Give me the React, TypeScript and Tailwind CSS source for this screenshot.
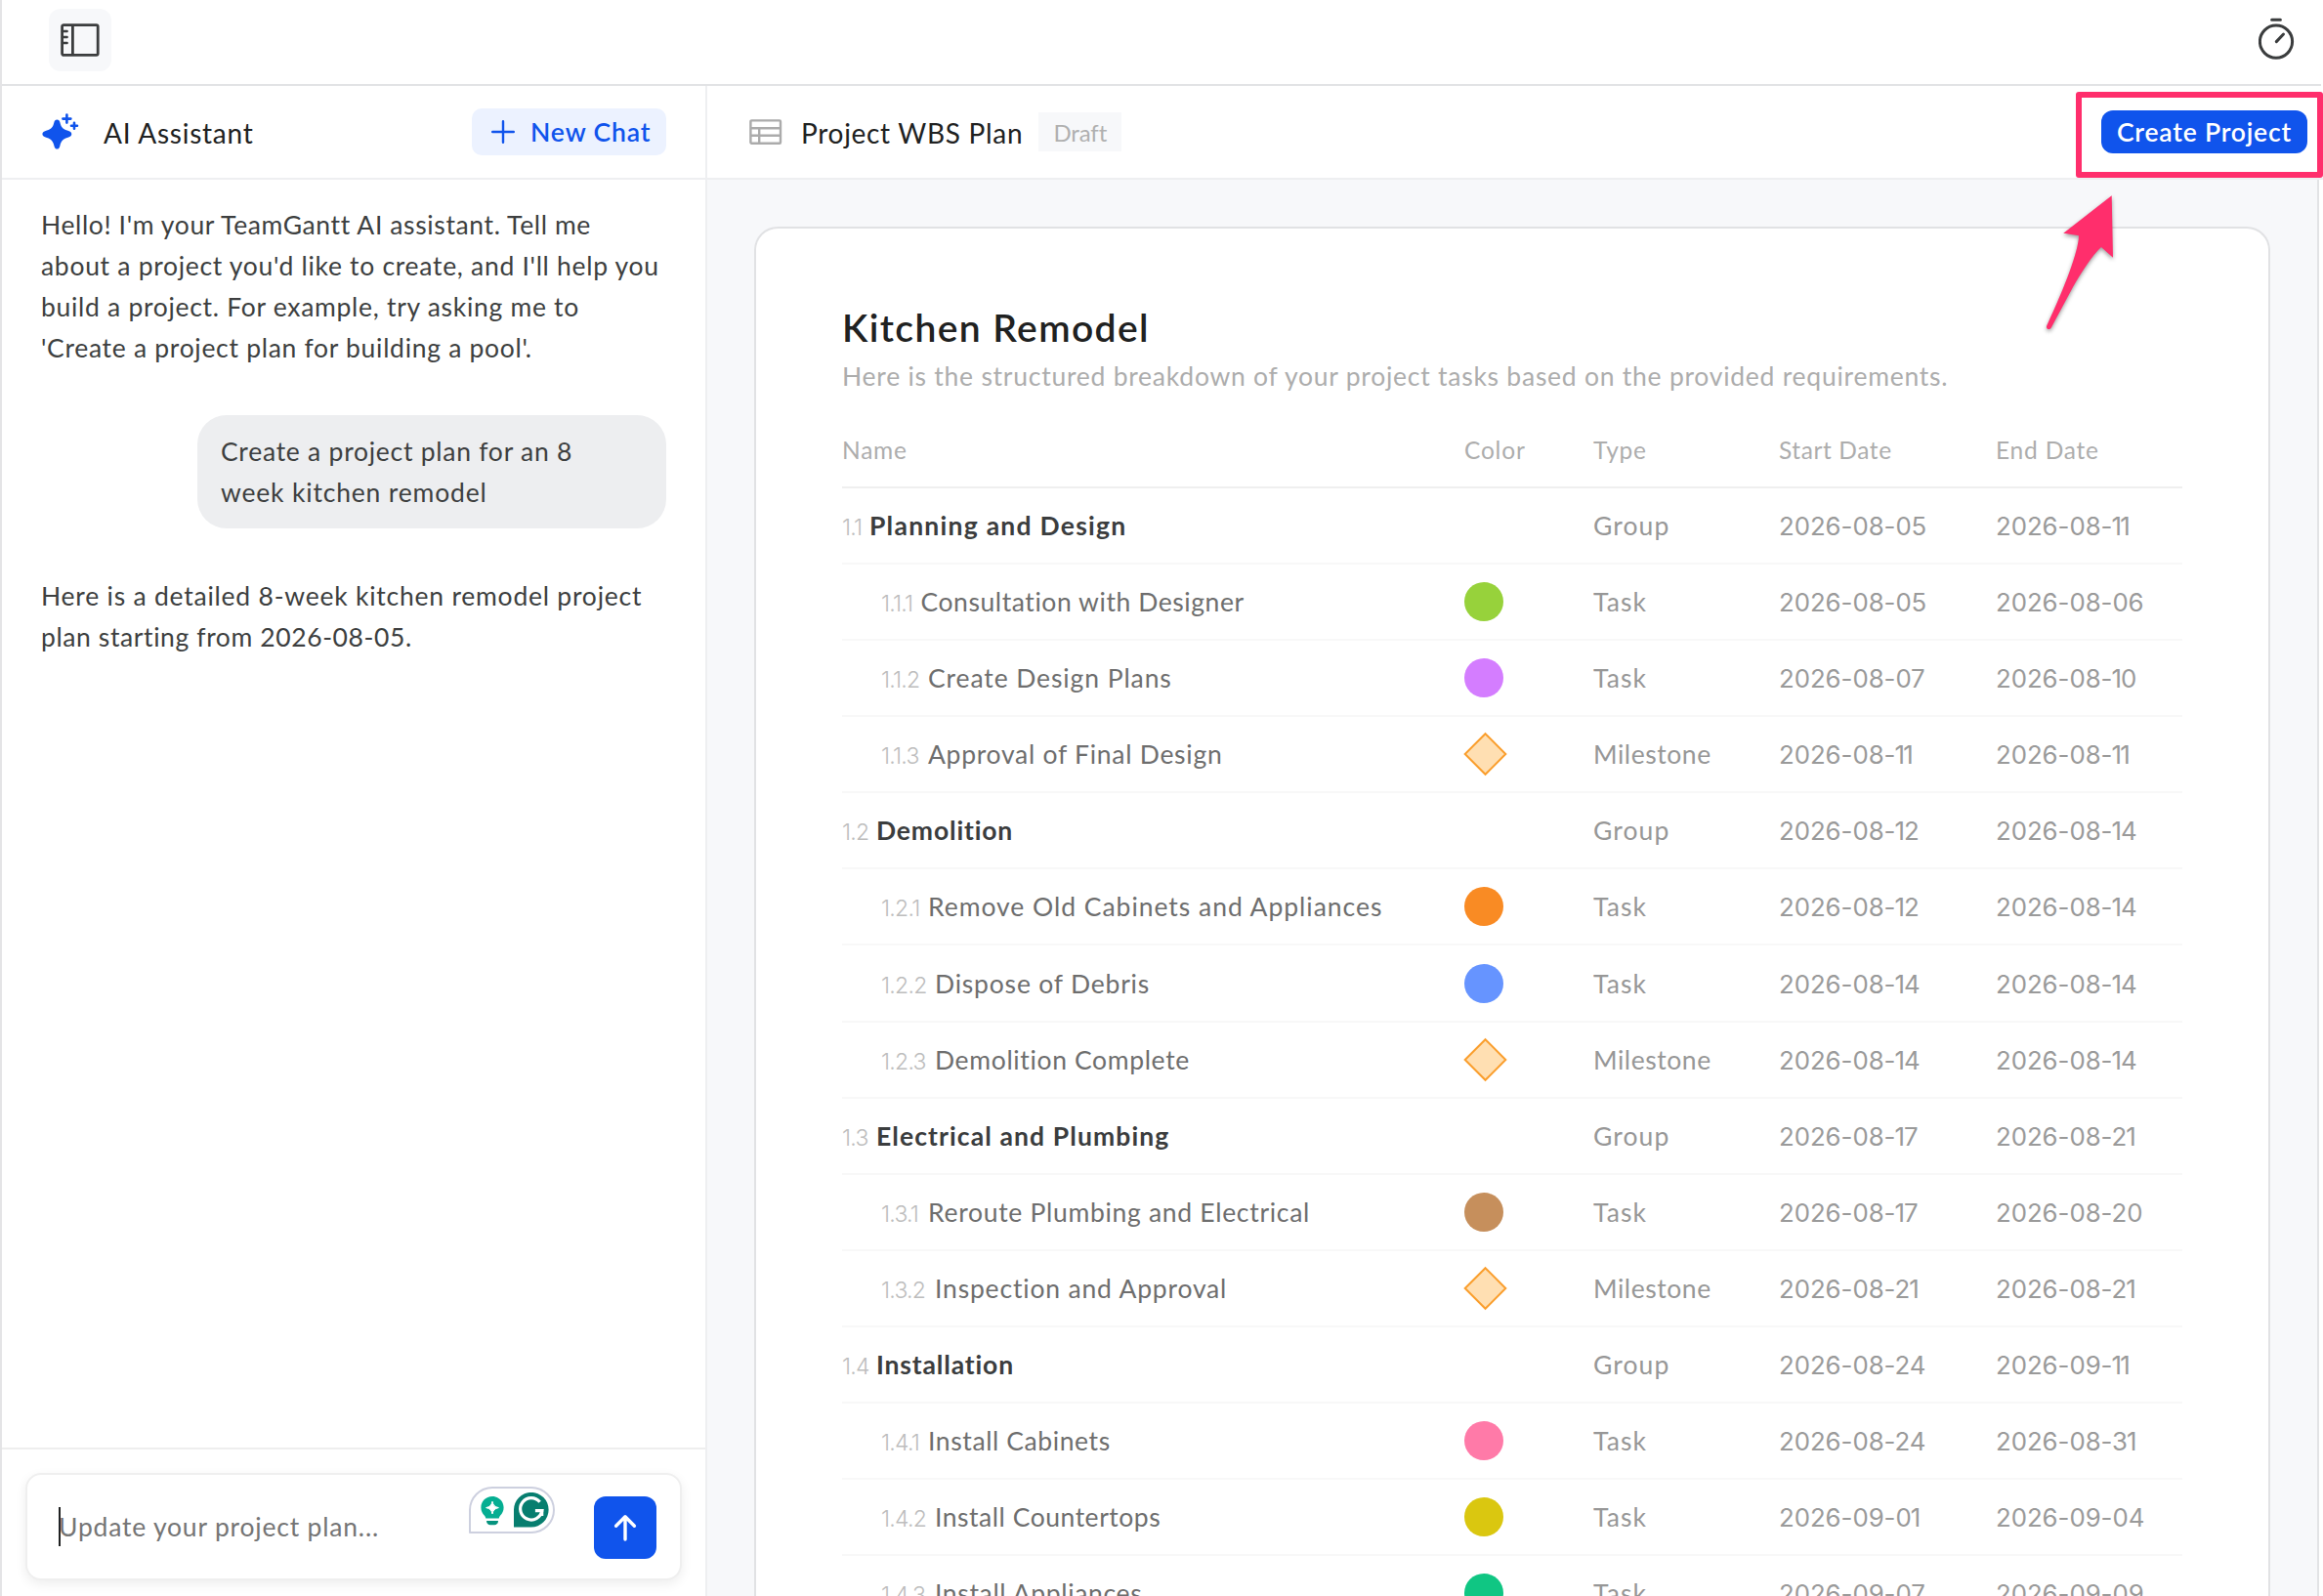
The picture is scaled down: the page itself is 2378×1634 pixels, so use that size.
import { Fragment } from "react";

type Kind = "Group" | "Task" | "Milestone";

interface Row {
  id: string;
  name: string;
  type: Kind;
  start: string;
  end: string;
  dot?: string;
  track: string;
}

const ROWS: Row[] = [
  { id: "1.1", name: "Planning and Design", type: "Group", start: "2026-08-05", end: "2026-08-11", track: "tracking-[1.25px]" },
  { id: "1.1.1", name: "Consultation with Designer", type: "Task", start: "2026-08-05", end: "2026-08-06", dot: "bg-[#97d23b]", track: "tracking-[0.57px]" },
  { id: "1.1.2", name: "Create Design Plans", type: "Task", start: "2026-08-07", end: "2026-08-10", dot: "bg-[#d47dff]", track: "tracking-[0.9px]" },
  { id: "1.1.3", name: "Approval of Final Design", type: "Milestone", start: "2026-08-11", end: "2026-08-11", track: "tracking-[0.73px]" },
  { id: "1.2", name: "Demolition", type: "Group", start: "2026-08-12", end: "2026-08-14", track: "tracking-[0.85px]" },
  { id: "1.2.1", name: "Remove Old Cabinets and Appliances", type: "Task", start: "2026-08-12", end: "2026-08-14", dot: "bg-[#f98b24]", track: "tracking-[0.97px]" },
  { id: "1.2.2", name: "Dispose of Debris", type: "Task", start: "2026-08-14", end: "2026-08-14", dot: "bg-[#6694ff]", track: "tracking-[0.8px]" },
  { id: "1.2.3", name: "Demolition Complete", type: "Milestone", start: "2026-08-14", end: "2026-08-14", track: "tracking-[0.65px]" },
  { id: "1.3", name: "Electrical and Plumbing", type: "Group", start: "2026-08-17", end: "2026-08-21", track: "tracking-[1.1px]" },
  { id: "1.3.1", name: "Reroute Plumbing and Electrical", type: "Task", start: "2026-08-17", end: "2026-08-20", dot: "bg-[#c68f5c]", track: "tracking-[0.7px]" },
  { id: "1.3.2", name: "Inspection and Approval", type: "Milestone", start: "2026-08-21", end: "2026-08-21", track: "tracking-[0.82px]" },
  { id: "1.4", name: "Installation", type: "Group", start: "2026-08-24", end: "2026-09-11", track: "tracking-[0.85px]" },
  { id: "1.4.1", name: "Install Cabinets", type: "Task", start: "2026-08-24", end: "2026-08-31", dot: "bg-[#ff7aa8]", track: "tracking-[0.6px]" },
  { id: "1.4.2", name: "Install Countertops", type: "Task", start: "2026-09-01", end: "2026-09-04", dot: "bg-[#dac710]", track: "tracking-[0.53px]" },
  { id: "1.4.3", name: "Install Appliances", type: "Task", start: "2026-09-07", end: "2026-09-09", dot: "bg-[#10c683]", track: "tracking-[0.65px]" },
];

const COLS = "grid grid-cols-[637px_132px_190px_222px_1fr]";

const TYPE_TRACK: Record<Kind, string> = {
  Group: "tracking-[1.1px]",
  Task: "tracking-[1.1px]",
  Milestone: "tracking-[0.55px]",
};

/* Date with a slightly narrower "1". */
function DateText({ text }: { text: string }) {
  return (
    <div className="pt-[2px] font-[Inter,sans-serif] text-[25.8px] tracking-[-0.05px] text-[#9a9a9a]">
      {text.split("").map((c, i) =>
        c === "1" ? (
          <span key={i} className="-mx-[0.9px]">1</span>
        ) : (
          <Fragment key={i}>{c}</Fragment>
        ),
      )}
    </div>
  );
}

function idWidth(id: string) {
  const ones = id.split("1").length - 1;
  if (id.length === 3) return ones === 2 ? "w-[28px]" : "w-[35px]";
  return ones === 3 ? "w-[40.5px]" : ones === 2 ? "w-[48px]" : "w-[55px]";
}

function SidebarIcon() {
  return (
    <svg width="40" height="34" viewBox="0 0 40 34" fill="none" stroke="#3b3d3e" strokeWidth="2.8">
      <rect x="1.6" y="1.6" width="36.6" height="30.8" rx="1.6" />
      <path d="M12.4 1.6v30.8" />
      <path d="M2 8h4.6M2 14h4.6M2 20h4.6" strokeWidth="2.5" strokeLinecap="round" />
    </svg>
  );
}

function StopwatchIcon() {
  return (
    <svg width="37" height="44" viewBox="0 0 37 44" fill="none" stroke="#3b3d3e" strokeWidth="3" strokeLinecap="round">
      <circle cx="18" cy="24.6" r="16.6" />
      <path d="M13.6 2.2h8.8M18.3 24.6l7.2-7.6" />
    </svg>
  );
}

function SparkleIcon() {
  return (
    <svg width="38" height="38" viewBox="0 0 38 38" fill="#1054ec">
      <path d="M15.4 6.4c1.6 0 2.6 1 3 2.8 1 4.600 2.600 6.600 7.400 8.400 3 1.100 4.500 1.900 4.500 3.700s-1.500 2.700-4.500 3.700c-4.600 1.600-6.300 3.600-7.400 8.200-.5 2.200-1.400 3.400-3 3.400s-2.500-1.200-3-3.400c-1.100-4.600-2.800-6.600-7.400-8.200-3-1-4.600-1.900-4.600-3.700s1.600-2.600 4.600-3.700c4.800-1.800 6.400-3.800 7.400-8.400.4-1.800 1.400-2.800 3-2.800z" />
      <path d="M25.400 1.600v8M21.400 5.600h8M33 9.800v6M30 12.800h6" stroke="#1054ec" strokeWidth="2.600" strokeLinecap="round" />
    </svg>
  );
}

function TableIcon() {
  return (
    <svg width="34" height="26" viewBox="0 0 34 26" fill="none" stroke="#ababab" strokeWidth="2.4">
      <rect x="1.400" y="1.400" width="30.600" height="23.400" rx="1" />
      <path d="M1.400 9.200h30.600M1.400 16.800h30.600M10.200 9.200v15.600" />
    </svg>
  );
}

function BulbIcon() {
  return (
    <svg width="24" height="30" viewBox="0 0 24 30">
      <path d="M12 0C5.400 0 .4 5 .4 11.400c0 3.400 1.500 6 3.400 8.200.9 1 1.300 1.900 1.500 3h13.400c.2-1.100.6-2 1.500-3 1.900-2.200 3.400-4.800 3.400-8.200C23.600 5 18.600 0 12 0z" fill="#05ae92" />
      <path d="M12 5.200c.9 4 2.300 5.400 6.400 6.400-4.100 1-5.500 2.400-6.400 6.400-.9-4-2.300-5.400-6.400-6.400 4.100-1 5.500-2.400 6.400-6.400z" fill="#fff" stroke="#fff" strokeWidth="1" strokeLinejoin="round" />
      <path d="M6 25h12c0 2.400-1.600 4.200-4 4.200h-4C7.600 29.200 6 27.400 6 25z" fill="#05937e" />
    </svg>
  );
}

function GrammarlyIcon() {
  return (
    <svg width="36" height="36" viewBox="0 0 36 36" fill="none">
      <path d="M0 35.500V17.800a17.800 17.800 0 1 1 17.800 17.700z" fill="#077e6f" />
      <path d="M26.600 9.800a11.200 11.200 0 1 0 2.300 8.800h-7" stroke="#fff" strokeWidth="3.200" />
      <path d="M29 18.600v5.400" stroke="#fff" strokeWidth="2.600" />
    </svg>
  );
}

function Shape({ row }: { row: Row }) {
  if (row.type === "Group") return <div />;
  if (row.type === "Milestone")
    return (
      <svg width="46" height="46" viewBox="0 0 46 46" className="-ml-[2px]">
        <path d="M23.500 2.200L44.300 23 23.500 43.800 2.700 23z" fill="#ffdfb2" stroke="#fa9e2d" strokeWidth="2" />
      </svg>
    );
  return <div className={`size-10 rounded-full ${row.dot}`} />;
}

function TableRow({ row }: { row: Row }) {
  const group = row.type === "Group";
  return (
    <div className={`${COLS} h-[78.08px] shrink-0 items-center border-b-2 border-[#f8f8f8] text-[26.5px] leading-[42px] text-[#979797]`}>
      <div className={group ? "flex items-baseline pt-[2px]" : "flex items-baseline pt-[2px] pl-10"}>
        <span className={`${idWidth(row.id)} shrink-0 whitespace-nowrap font-[Inter,sans-serif] text-[23px] font-light tracking-[-0.75px] text-[#bdbdbd]`}>{row.id}</span>
        <span className={`${row.track} whitespace-nowrap ${group ? "font-bold text-[#3b3d3e]" : "text-[#6e6e6e]"}`}>{row.name}</span>
      </div>
      <Shape row={row} />
      <div className={TYPE_TRACK[row.type]}>{row.type}</div>
      <DateText text={row.start} />
      <DateText text={row.end} />
    </div>
  );
}

function ChatPanel() {
  return (
    <aside className="flex w-[722px] shrink-0 flex-col border-r-2 border-[#eeeff1]">
      <header className="flex h-24 shrink-0 items-center border-b-2 border-[#eeeff1] pr-10 pl-[41px]">
        <SparkleIcon />
        <h2 className="ml-[25px] pt-px text-[28px] tracking-[0.75px] text-[#202121]">AI Assistant</h2>
        <button className="ml-auto flex h-12 w-[199px] items-center rounded-[10px] bg-[#ecf2ff] pl-5 text-[26.5px] font-semibold tracking-[0.9px] text-[#1054ec]">
          <svg width="24" height="24" viewBox="0 0 24 24" stroke="#1054ec" strokeWidth="2.400" strokeLinecap="round">
            <path d="M12 1.200v21.600M1.200 12h21.600" />
          </svg>
          <span className="ml-4 pt-[2px] whitespace-nowrap">New Chat</span>
        </button>
      </header>

      <div className="flex grow flex-col px-10 pt-[25px] text-[26.5px] leading-[42px] text-[#3d3f40]">
        <p className="-mr-6 whitespace-nowrap tracking-[0.7px]">
          <span className="tracking-[0.62px]">Hello! I'm your TeamGantt AI assistant. Tell me</span>
          <br />
          about a project you'd like to create, and I'll help you
          <br />
          build a project. For example, try asking me to
          <br />
          'Create a project plan for building a pool'.
        </p>
        <div className="mt-12 w-[480px] self-end rounded-[30px] bg-[#edeef0] p-4 px-6 tracking-[0.74px]">
          Create a project plan for an 8
          <br />
          <span className="tracking-[0.82px]">week kitchen remodel</span>
        </div>
        <p className="mt-12 whitespace-nowrap tracking-[0.77px]">
          Here is a detailed 8-week kitchen remodel project
          <br />
          <span className="tracking-[0.6px]">plan starting from 2026-08-05.</span>
        </p>
      </div>

      <footer className="h-[152px] shrink-0 border-t-2 border-[#eeeeee] px-6 pt-6">
        <div className="flex h-[110px] items-center rounded-2xl border-2 border-[#efefef] bg-white pr-6 pl-8 shadow-[0_4px_12px_rgba(0,0,0,0.07)]">
          <div className="h-10 w-[2px] bg-[#202121]" />
          <span className="-ml-[2px] text-[26.5px] leading-[42px] tracking-[0.8px] text-[#757575]">Update your project plan...</span>
          <div className="mr-10 -mt-[35px] ml-auto flex h-12 w-[88px] items-center rounded-t-[24px] rounded-br-[24px] rounded-bl-[1px] border-2 border-[#cdd0df] pl-[10px]">
            <span className="mt-[2px]"><BulbIcon /></span>
            <span className="ml-[10px]"><GrammarlyIcon /></span>
          </div>
          <button className="mt-px flex size-16 items-center justify-center rounded-xl bg-[#1054ec]">
            <svg width="24" height="28" viewBox="0 0 24 28" fill="none" stroke="#fff" strokeWidth="3.400" strokeLinecap="round" strokeLinejoin="round">
              <path d="M12 26V3M2.600 12.200L12 2.800l9.400 9.400" />
            </svg>
          </button>
        </div>
      </footer>
    </aside>
  );
}

function PlanPanel() {
  return (
    <main className="flex grow flex-col">
      <header className="flex h-24 shrink-0 items-center border-b-2 border-[#eeeff1] pr-4 pl-[43px]">
        <TableIcon />
        <h1 className="ml-[19px] pt-px text-[28px] tracking-[0.7px] text-[#202121]">Project WBS Plan</h1>
        <span className="ml-[16px] flex h-10 w-[85px] items-center justify-center bg-[#f7f8fa] pt-[2px] text-[24px] tracking-[-0.1px] text-[#b0b0b0]">Draft</span>
        <button className="ml-auto h-11 w-[211px] rounded-xl bg-[#1054ec] pt-[2px] text-[26.5px] font-semibold tracking-[0.8px] text-white">Create Project</button>
      </header>

      <div className="mr-1 flex min-h-0 grow flex-col overflow-hidden border-r-2 border-[#e2e3e5] bg-[#f7f8fa] px-12 pt-12">
        <section className="flex min-h-0 grow flex-col overflow-hidden rounded-t-3xl border-2 border-b-0 border-[#e1e2e4] bg-white px-[88px] pt-[76px]">
          <h2 className="text-[39px] leading-[50px] font-semibold tracking-[1.4px] text-[#202121]">Kitchen Remodel</h2>
          <p className="mt-[4px] text-[26.5px] leading-[42px] whitespace-nowrap tracking-[0.75px] text-[#adadad]">
            Here is the structured breakdown of your project tasks based on the provided requirements.
          </p>
          <div className={`${COLS} mt-[16px] h-[78px] shrink-0 items-center border-b-2 border-[#efefef] pt-[2px] text-[24.5px] leading-[42px] tracking-[0.8px] text-[#adadad]`}>
            <div>Name</div>
            <div>Color</div>
            <div>Type</div>
            <div className="tracking-[0.6px]">Start Date</div>
            <div>End Date</div>
          </div>
          {ROWS.map((row) => (
            <TableRow key={row.id} row={row} />
          ))}
        </section>
      </div>
    </main>
  );
}

/* Highlight frame and pointer over the Create Project button. */
function Callout() {
  return (
    <>
      <div className="absolute top-[94px] right-0 h-[88px] w-[253px] rounded-[3px] border-6 border-[#ff2e6c]" />
      <svg className="absolute top-[196px] left-[2086px] drop-shadow-[0_2px_2px_rgba(0,0,0,0.4)]" width="80" height="148" viewBox="0 0 80 148" fill="#ff2e6c">
        <path d="M73.700 4.300L75 67.700L63 57C54 65 42 84 34 98L11.800 139.500C10 142.500 6 141 7.200 137.500L9 133.500C22 106 40 62 40 45.300L24.300 42.700Z" />
      </svg>
    </>
  );
}

export default function App() {
  return (
    <div className="relative flex h-[1634px] w-[2378px] flex-col overflow-hidden border-l-2 border-[#e4e4e6] bg-white font-[Lato,sans-serif] [font-variant-ligatures:none]">
      <nav className="mr-[2px] flex h-[88px] shrink-0 items-center justify-between border-b-2 border-[#e2e3e5] pr-[27px] pl-12">
        <button className="-mt-[4px] flex size-16 items-center justify-center rounded-xl bg-[#f7f8fa]">
          <SidebarIcon />
        </button>
        <span className="-mt-[6px]"><StopwatchIcon /></span>
      </nav>
      <div className="flex min-h-0 grow">
        <ChatPanel />
        <PlanPanel />
      </div>
      <Callout />
    </div>
  );
}
